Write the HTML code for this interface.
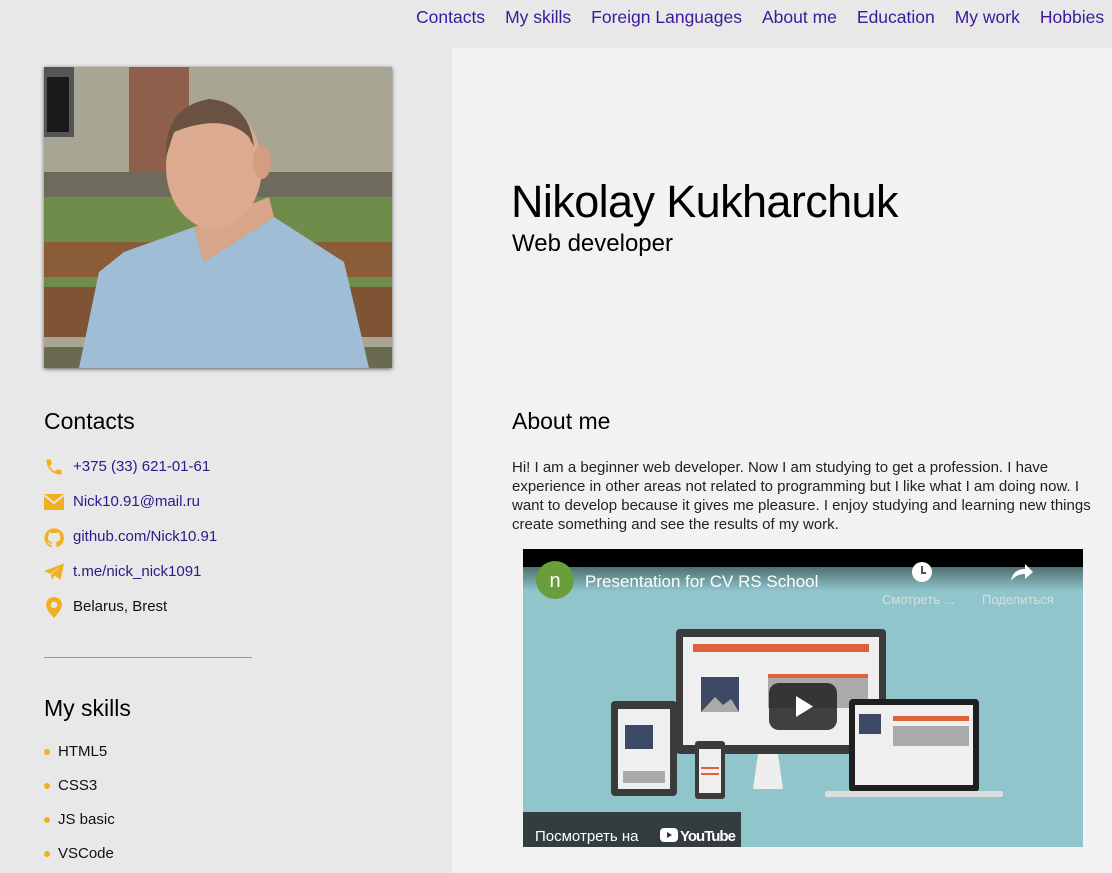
<!DOCTYPE html>
<html><head><meta charset="utf-8"><style>
*{margin:0;padding:0;box-sizing:border-box}
body{width:1112px;height:873px;overflow:hidden;background:#e8e8e8;font-family:"Liberation Sans",sans-serif;position:relative;color:#111}
.nav{position:absolute;top:7px;left:416px;white-space:nowrap;font-size:17.5px;color:#3b1a9a}
.nav span{margin-right:20px}
.right{position:absolute;left:452px;top:48px;width:660px;height:825px;background:#f2f2f2}
.photo{position:absolute;left:44px;top:67px;width:348px;height:301px;box-shadow:0 1px 4px rgba(0,0,0,.6)}
h2{position:absolute;font-weight:normal;font-size:23px;color:#000}
.c{position:absolute;left:73px;font-size:15px;color:#2a1a8a}
.ic{position:absolute;left:44px}
.hr{position:absolute;left:44px;top:657px;width:208px;border-top:1px solid #999}
.sk{position:absolute;left:58px;font-size:15px}
.dot{position:absolute;left:44px;width:6px;height:6px;border-radius:50%;background:#f0b020}
</style></head><body>
<div class="nav"><span>Contacts</span><span>My skills</span><span>Foreign Languages</span><span>About me</span><span>Education</span><span>My work</span><span>Hobbies</span></div>
<div class="right"></div>
<svg class="photo" viewBox="0 0 348 301" preserveAspectRatio="none">
<rect width="348" height="301" fill="#a9a595"/>
<rect x="0" y="0" width="30" height="70" fill="#555"/><rect x="3" y="10" width="22" height="55" fill="#1a1a1a"/>
<rect x="85" y="0" width="60" height="135" fill="#8e604c"/>
<rect x="0" y="105" width="348" height="30" fill="#6e6a5c"/>
<rect x="0" y="130" width="348" height="100" fill="#6f8c4a"/>
<rect x="0" y="175" width="348" height="35" fill="#8b5c38"/>
<rect x="0" y="220" width="348" height="50" fill="#7e5434"/>
<rect x="0" y="280" width="348" height="21" fill="#6a6a50"/>
<path d="M35 301 L55 205 L80 185 L150 160 L160 195 L230 150 L300 195 L325 301Z" fill="#9fbdd4"/>
<path d="M150 160 L160 195 L230 150 L225 130 Z" fill="#d8a58a"/>
<ellipse cx="170" cy="100" rx="48" ry="62" fill="#dcaa8e"/>
<path d="M122 90 Q120 40 165 32 Q205 35 210 80 L205 70 Q180 45 130 65Z" fill="#6a5242"/>
<ellipse cx="218" cy="95" rx="9" ry="17" fill="#d49c80"/>
</svg>
<h2 style="left:44px;top:408px">Contacts</h2>
<svg class="ic" style="top:457px" width="20" height="20" viewBox="0 0 24 24"><path fill="#f0b020" d="M6.6 10.8c1.4 2.8 3.8 5.1 6.6 6.6l2.2-2.2c.3-.3.7-.4 1-.2 1.1.4 2.300.6 3.6.6.6 0 1 .4 1 1V20c0 .6-.4 1-1 1C10.6 21 3 13.4 3 4c0-.6.4-1 1-1h3.5c.6 0 1 .4 1 1 0 1.3.2 2.5.6 3.6.1.3 0 .7-.2 1z"/></svg>
<div class="c" style="top:458px">+375 (33) 621-01-61</div>
<svg class="ic" style="top:494px" width="20" height="16" viewBox="0 0 20 16"><rect width="20" height="16" fill="#f0b020"/><path d="M0 1 L10 9 L20 1" stroke="#e8e8e8" stroke-width="2" fill="none"/></svg>
<div class="c" style="top:493px">Nick10.91@mail.ru</div>
<svg class="ic" style="top:528px" width="20" height="20" viewBox="0 0 24 24"><path fill="#f0b020" d="M12 .5a11.5 11.5 0 0 0-3.6 22.4c.6.1.8-.3.8-.6v-2c-3.200.7-3.9-1.5-3.9-1.5-.5-1.3-1.3-1.7-1.3-1.7-1-.7.1-.7.1-.7 1.2.1 1.8 1.2 1.8 1.2 1 1.8 2.7 1.3 3.4 1 .1-.8.4-1.3.7-1.6-2.6-.3-5.3-1.3-5.3-5.7 0-1.3.5-2.3 1.2-3.1-.1-.3-.5-1.5.1-3.1 0 0 1-.3 3.2 1.2a11 11 0 0 1 5.8 0c2.2-1.5 3.2-1.2 3.2-1.2.6 1.6.2 2.8.1 3.1.8.8 1.2 1.9 1.2 3.1 0 4.4-2.7 5.4-5.3 5.7.4.4.8 1.1.8 2.2v3.2c0 .3.2.7.8.6A11.5 11.5 0 0 0 12 .5z"/></svg>
<div class="c" style="top:528px">github.com/Nick10.91</div>
<svg class="ic" style="top:563px" width="21" height="18" viewBox="0 0 24 20"><path fill="#f0b020" d="M0 9 L23 0 L19 19 L12 14 L9 19 L8 13 L19 4 L7 12Z"/></svg>
<div class="c" style="top:563px">t.me/nick_nick1091</div>
<svg class="ic" style="top:597px;left:46px" width="16" height="21" viewBox="0 0 16 21"><path fill="#f0b020" d="M8 0C3.6 0 0 3.4 0 7.8 0 13 8 21 8 21s8-8 8-13.2C16 3.4 12.4 0 8 0zm0 11a3.2 3.2 0 1 1 0-6.4A3.2 3.2 0 0 1 8 11z"/></svg>
<div class="c" style="top:598px;color:#111">Belarus, Brest</div>
<div class="hr"></div>
<h2 style="left:44px;top:695px">My skills</h2>
<div class="dot" style="top:749px"></div><div class="sk" style="top:743px">HTML5</div>
<div class="dot" style="top:783px"></div><div class="sk" style="top:777px">CSS3</div>
<div class="dot" style="top:817px"></div><div class="sk" style="top:811px">JS basic</div>
<div class="dot" style="top:851px"></div><div class="sk" style="top:845px">VSCode</div>
<div style="position:absolute;left:511px;top:176px;font-size:45px;letter-spacing:-0.6px;color:#000">Nikolay Kukharchuk</div>
<div style="position:absolute;left:512px;top:230px;font-size:24px;color:#000">Web developer</div>
<h2 style="left:512px;top:408px">About me</h2>
<div style="position:absolute;left:512px;top:458px;width:585px;font-size:15px;line-height:19px;color:#222">Hi! I am a beginner web developer. Now I am studying to get a profession. I have experience in other areas not related to programming but I like what I am doing now. I want to develop because it gives me pleasure. I enjoy studying and learning new things create something and see the results of my work.</div>
<svg style="position:absolute;left:523px;top:549px" width="560" height="298" viewBox="0 0 560 298">
<defs><linearGradient id="g" x1="0" y1="0" x2="0" y2="1"><stop offset="0" stop-color="#4f6f72"/><stop offset=".3" stop-color="#8fc5cb"/></linearGradient></defs>
<rect width="560" height="298" fill="#8fc5cb"/>
<rect y="18" width="560" height="80" fill="url(#g)"/>
<rect width="560" height="18" fill="#000"/>
<circle cx="32" cy="31" r="19" fill="#6a9e3a"/><text x="32" y="38" fill="#fff" font-size="20" text-anchor="middle" font-family="Liberation Sans">n</text>
<text x="62" y="38" fill="#fff" font-size="17" font-family="Liberation Sans">Presentation for CV RS School</text>
<circle cx="399" cy="23" r="10" fill="#fff"/><path d="M399 17v7h4" stroke="#555" stroke-width="2" fill="none"/>
<path d="M488 32 Q490 20 502 20 L502 15 L510 23 L502 30 L502 25 Q493 25 488 32Z" fill="#fff"/>
<text x="359" y="55" fill="#ddd" font-size="13" font-family="Liberation Sans">Смотреть ...</text>
<text x="459" y="55" fill="#ddd" font-size="13" font-family="Liberation Sans">Поделиться</text>
<rect x="153" y="80" width="210" height="125" rx="4" fill="#3b3b3b"/><rect x="160" y="88" width="196" height="108" fill="#efefef"/>
<rect x="170" y="95" width="176" height="8" fill="#e0603a"/><rect x="245" y="125" width="100" height="4" fill="#e0603a"/><rect x="245" y="129" width="100" height="30" fill="#aaa"/>
<rect x="178" y="128" width="38" height="35" fill="#3d4a66"/><path d="M178 163 L192 148 L200 156 L208 150 L216 163Z" fill="#aaa"/>
<path d="M235 205 L255 205 L260 240 L230 240Z" fill="#eee"/>
<rect x="88" y="152" width="66" height="95" rx="4" fill="#3b3b3b"/><rect x="95" y="160" width="52" height="80" fill="#efefef"/><rect x="102" y="176" width="28" height="24" fill="#3d4a66"/><rect x="100" y="222" width="42" height="12" fill="#aaa"/>
<rect x="172" y="192" width="30" height="58" rx="3" fill="#3b3b3b"/><rect x="176" y="200" width="22" height="44" fill="#efefef"/><rect x="178" y="218" width="18" height="2" fill="#e0603a"/><rect x="178" y="224" width="18" height="2" fill="#e0603a"/>
<rect x="326" y="150" width="130" height="93" rx="4" fill="#1f1f1f"/><rect x="332" y="156" width="118" height="80" fill="#efefef"/><rect x="370" y="167" width="76" height="5" fill="#e0603a"/><rect x="370" y="177" width="76" height="20" fill="#aaa"/><rect x="336" y="165" width="22" height="20" fill="#3d4a66"/>
<rect x="302" y="242" width="178" height="6" rx="2" fill="#ddd"/>
<rect x="246" y="134" width="68" height="47" rx="10" fill="#212121" opacity=".85"/><path d="M273 147 L273 168 L290 157.5Z" fill="#fff"/>
<rect y="263" width="218" height="35" fill="#333c3f"/>
<text x="12" y="292" fill="#fff" font-size="15" font-family="Liberation Sans">Посмотреть на</text>
<rect x="137" y="279" width="18" height="14" rx="4" fill="#fff"/><path d="M144 283v6l5-3z" fill="#333"/>
<text x="157" y="292" fill="#fff" font-size="15" font-weight="bold" letter-spacing="-1" font-family="Liberation Sans">YouTube</text>
</svg>
</body></html>
